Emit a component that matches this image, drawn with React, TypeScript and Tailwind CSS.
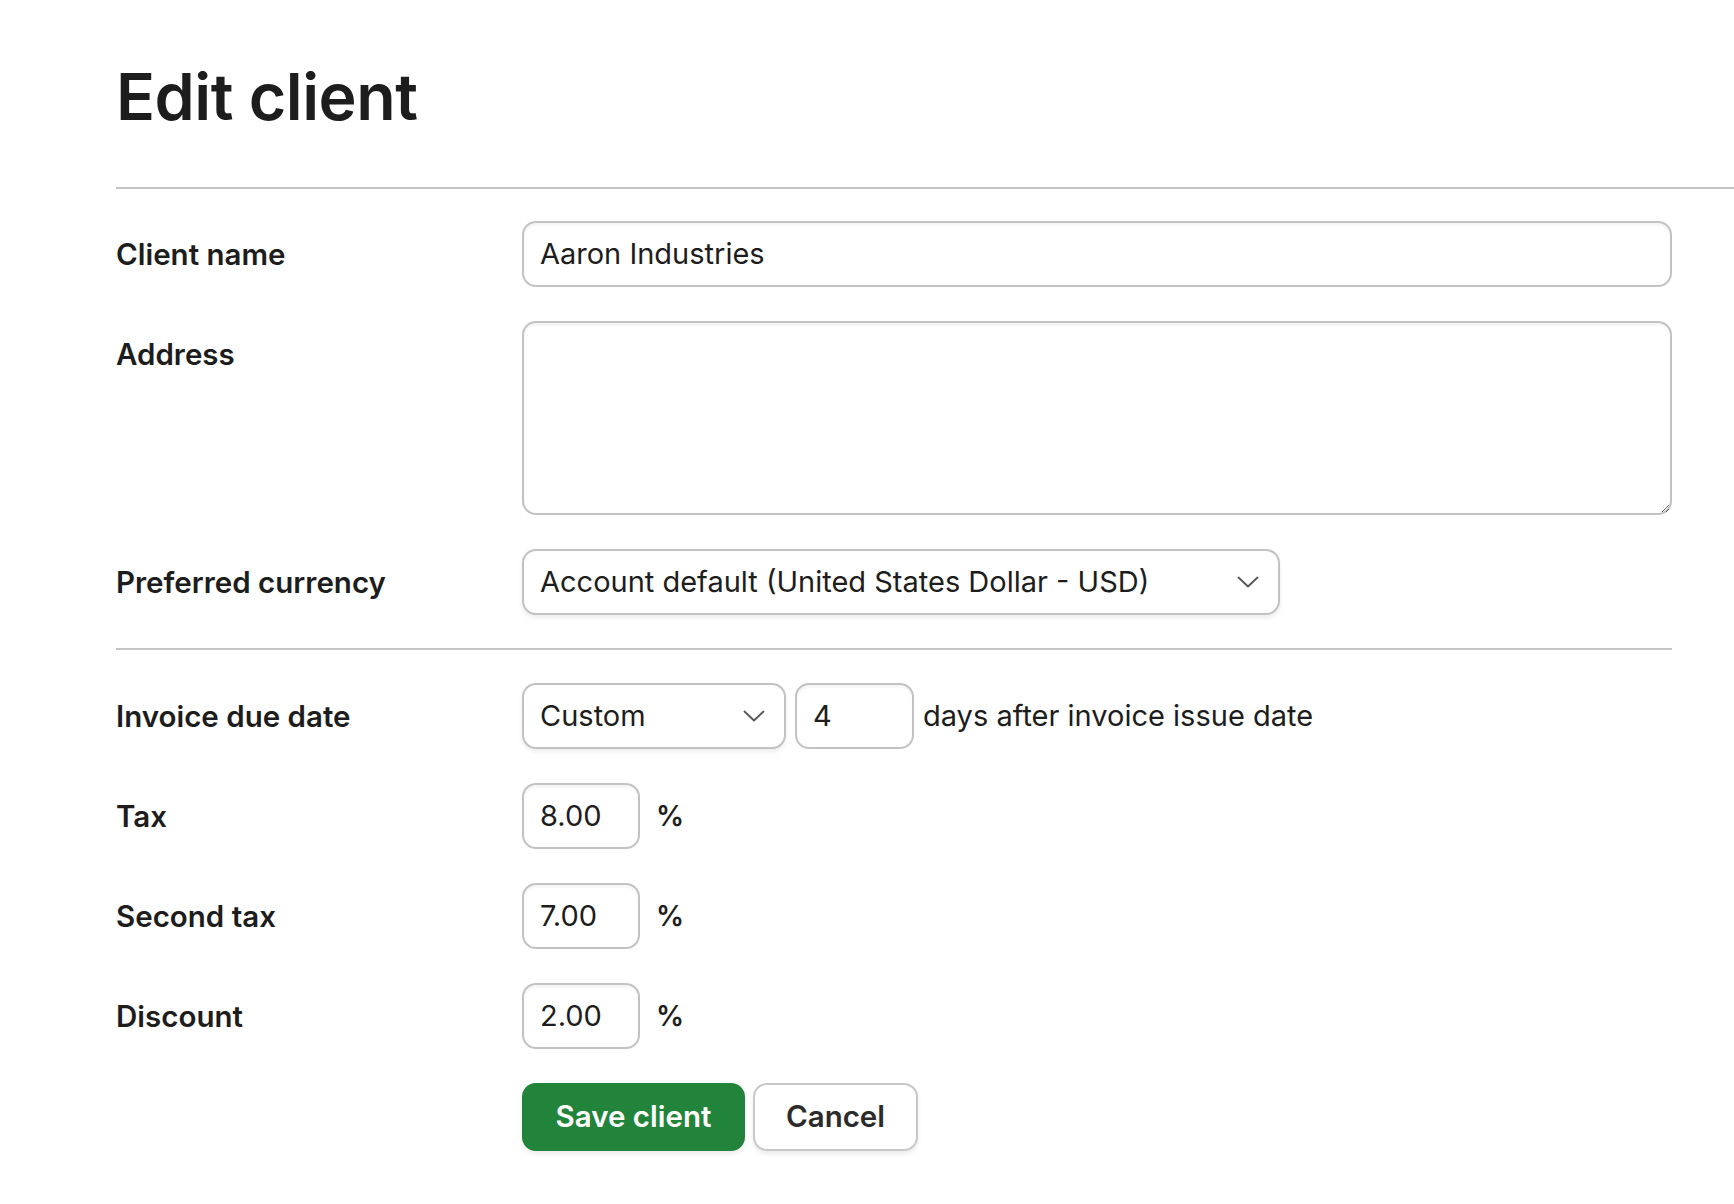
import React from "react";

const font = { fontFamily: "Inter, 'Noto Sans', sans-serif" };

const Chevron = () => (
  <svg width="22" height="12" viewBox="0 0 22 12" fill="none" className="pointer-events-none absolute right-[21px] top-1/2 -translate-y-1/2">
    <path d="M1.5 1.5 L11 10.5 L20.5 1.5" stroke="#555" strokeWidth="1.8" strokeLinecap="round" strokeLinejoin="round" />
  </svg>
);

const inputCls =
  "h-[66px] rounded-[14px] border-2 border-[#c2c2c2] bg-white px-[16px] text-[29px] text-[#1d1d1d] outline-none shadow-[inset_0_3px_2px_rgba(0,0,0,0.04)]";

const Row = ({ label, children }: { label: string; children: React.ReactNode }) => (
  <div className="flex items-start">
    <label className="w-[406px] shrink-0 text-[29.5px] font-semibold leading-[66px] text-[#1d1d1d]">{label}</label>
    <div className="flex flex-1 items-center">{children}</div>
  </div>
);

const Select = ({ value, width }: { value: string; width: string }) => (
  <div className={`relative ${width}`}>
    <select
      defaultValue={value}
      className="h-[66px] w-full appearance-none rounded-[14px] border-2 border-[#c2c2c2] bg-white pl-[16px] pr-[60px] text-[29px] text-[#1d1d1d] outline-none shadow-[0_3px_4px_rgba(0,0,0,0.07)]"
    >
      <option>{value}</option>
    </select>
    <Chevron />
  </div>
);

const Percent = ({ value }: { value: string }) => (
  <>
    <input defaultValue={value} className={`${inputCls} w-[118px]`} />
    <span className="ml-[16px] text-[28px] font-semibold text-[#1d1d1d]">%</span>
  </>
);

export default function App() {
  return (
    <div style={font} className="min-h-screen bg-white pl-[116px] text-[#1d1d1d]">
      <h1 className="pt-[65px] text-[64.5px] font-semibold leading-none tracking-[-0.5px] text-[#1d1d1d]">Edit client</h1>
      <hr className="mt-[57px] border-t-2 border-[#c4c4c4]" />

      <form className="w-[1556px] pt-[32px]">
        <div className="flex flex-col gap-[34px]">
          <Row label="Client name">
            <input defaultValue="Aaron Industries" className={`${inputCls} w-full`} />
          </Row>
          <Row label="Address">
            <textarea className="h-[194px] w-full rounded-[14px] border-2 border-[#c2c2c2] bg-white px-[16px] py-[12px] text-[29px] outline-none shadow-[inset_0_3px_2px_rgba(0,0,0,0.04)]" />
          </Row>
          <Row label="Preferred currency">
            <Select value="Account default (United States Dollar - USD)" width="w-[758px]" />
          </Row>
        </div>

        <hr className="my-[33px] border-t-2 border-[#c4c4c4]" />

        <div className="flex flex-col gap-[34px]">
          <Row label="Invoice due date">
            <Select value="Custom" width="w-[264px]" />
            <input defaultValue="4" className={`${inputCls} ml-[9px] w-[119px]`} />
            <span className="ml-[9px] text-[29px] text-[#1d1d1d]">days after invoice issue date</span>
          </Row>
          <Row label="Tax">
            <Percent value="8.00" />
          </Row>
          <Row label="Second tax">
            <Percent value="7.00" />
          </Row>
          <Row label="Discount">
            <Percent value="2.00" />
          </Row>
          <div className="flex pl-[406px]">
            <button type="button" className="h-[68px] w-[223px] rounded-[14px] bg-[#22843a] text-[29.5px] font-semibold text-white shadow-[0_3px_4px_rgba(0,0,0,0.08)]">
              Save client
            </button>
            <button type="button" className="ml-[8px] h-[68px] w-[165px] rounded-[14px] border-2 border-[#c8c8c8] bg-white text-[29.5px] font-semibold text-[#2b2b2b] shadow-[0_3px_4px_rgba(0,0,0,0.08)]">
              Cancel
            </button>
          </div>
        </div>
      </form>
    </div>
  );
}
